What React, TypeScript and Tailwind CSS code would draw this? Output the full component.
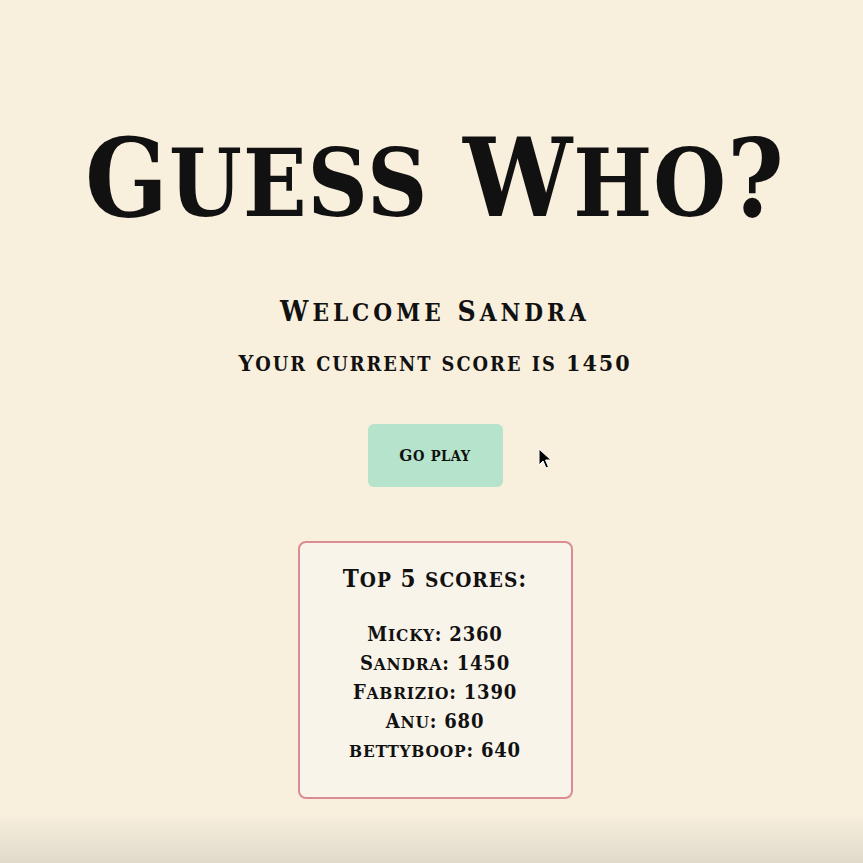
import React from 'react'

const SCORES = [
  { name: 'Micky', score: 2360 },
  { name: 'Sandra', score: 1450 },
  { name: 'Fabrizio', score: 1390 },
  { name: 'Anu', score: 680 },
  { name: 'bettyboop', score: 640 },
]

// small caps with taller lowercase caps than the browser's synthetic ones
function SC({ text }: { text: string }) {
  const parts = text.match(/[a-z]+|[^a-z]+/g) ?? []
  return (
    <>
      {parts.map((p, i) =>
        /^[a-z]/.test(p) ? (
          <span key={i} className="uppercase text-[0.86em]">{p}</span>
        ) : (
          <span key={i}>{p}</span>
        ),
      )}
    </>
  )
}

export default function App() {
  return (
    <div className="relative min-h-[863px] bg-[#f8efdd] text-[#111] font-['DejaVu_Serif_Condensed','DejaVu_Serif',serif] font-bold overflow-hidden">
      <div className="flex flex-col items-center pt-[114px] pl-[7px]">

        {/* Title */}
        <h1 className="text-[108px] leading-[128px] tracking-[1px]"><SC text="Guess Who?" /></h1>

        {/* Greeting */}
        <h2 className="mt-[44px] text-[28px] leading-[40px] tracking-[4px]"><SC text="Welcome Sandra" /></h2>
        <p className="mt-[14px] text-[23px] leading-[32px] tracking-[2px]"><SC text="Your current score is 1450" /></p>

        {/* Play button */}
        <button className="mt-[44px] w-[135px] h-[63px] rounded-[6px] bg-[#b5e3cb] text-[17px] tracking-[0.5px]">
          <SC text="Go play" />
        </button>

        {/* Top scores */}
        <div className="mt-[54px] w-[275px] h-[258px] rounded-[8px] border-2 border-[#da8c95] bg-[#f9f4ea] flex flex-col items-center pt-[20px]">
          <h3 className="text-[24px] leading-[32px] tracking-[1px]"><SC text="Top 5 scores:" /></h3>
          <ul className="mt-[24px] flex flex-col items-center text-[20px] leading-[28px] tracking-[0.8px]">
            {SCORES.map((s) => (
              <li key={s.name}><SC text={`${s.name}: ${s.score}`} /></li>
            ))}
          </ul>
        </div>
      </div>

      {/* Mouse cursor */}
      <svg className="absolute left-[538px] top-[448px]" width="14" height="22" viewBox="0 0 14 22">
        <path d="M1 1 L1 17 L5 13 L8 20 L10.5 19 L7.5 12 L13 12 Z" fill="#000" stroke="#fff" strokeWidth="1" />
      </svg>

      {/* Bottom shading */}
      <div className="absolute inset-x-0 bottom-0 h-[50px] bg-gradient-to-b from-[#f8efdd00] to-[#e0dacb]" />
    </div>
  )
}
